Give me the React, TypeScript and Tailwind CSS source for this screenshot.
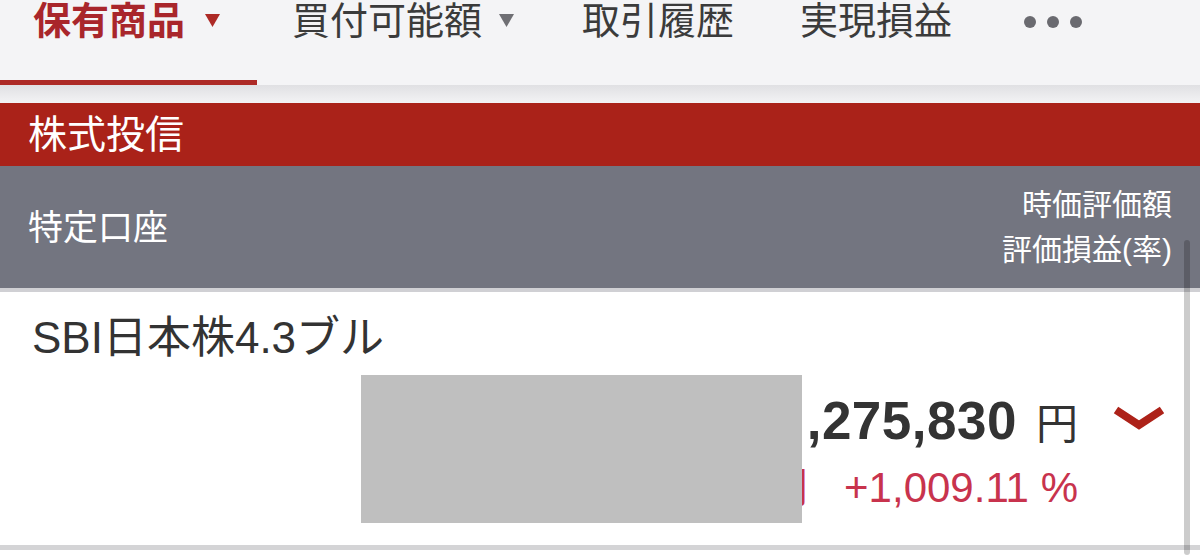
import React from "react";

function Caret({ color }: { color: string }) {
  return (
    <svg width="15" height="13" viewBox="0 0 15 13" className="shrink-0">
      <polygon points="0,0 15,0 7.5,13" fill={color} />
    </svg>
  );
}

function Chevron() {
  return (
    <svg width="52" height="26" viewBox="0 0 52 26" className="shrink-0">
      <polyline
        points="3,4 26,19 49,4"
        fill="none"
        stroke="#ad2219"
        strokeWidth="8"
        strokeLinejoin="miter"
      />
    </svg>
  );
}

function TabBar() {
  return (
    <div className="flex h-[85px] items-start bg-[#f4f4f6] text-[38px] leading-none text-[#3b3b3b]">
      <div className="flex h-full w-[257px] items-start border-b-[5px] border-[#ad2a26] pl-[33px] pt-[2px]">
        <span className="font-bold text-[#a9262b]">保有商品</span>
        <span className="ml-[20px] mt-[12px]">
          <Caret color="#ad2a26" />
        </span>
      </div>
      <div className="ml-[35px] flex items-start pt-[2px]">
        <span>買付可能額</span>
        <span className="ml-[17px] mt-[12px]">
          <Caret color="#6f6f74" />
        </span>
      </div>
      <span className="ml-[68px] pt-[2px]">取引履歴</span>
      <span className="ml-[66px] pt-[2px]">実現損益</span>
      <div className="ml-[72px] flex gap-[11px] pt-[16px]">
        <span className="size-[12px] rounded-full bg-[#6a6a70]" />
        <span className="size-[12px] rounded-full bg-[#6a6a70]" />
        <span className="size-[12px] rounded-full bg-[#6a6a70]" />
      </div>
    </div>
  );
}

export default function App() {
  return (
    <div className="relative h-[555px] w-[1200px] overflow-hidden bg-white font-['Liberation_Sans','Noto_Sans_CJK_JP',sans-serif]">
      <TabBar />
      <div className="h-[18px] bg-gradient-to-b from-[#e0e0e3] to-[#f3f3f5]" />

      <div className="flex h-[63px] items-center bg-[#aa2219] pl-[28px] text-[39px] leading-none text-white">
        株式投信
      </div>

      <div className="flex h-[126px] items-center justify-between border-b-[4px] border-[#d0d0d4] bg-[#737580] pl-[28px] pr-[28px] text-white">
        <span className="text-[35px] leading-none">特定口座</span>
        <div className="flex flex-col items-end text-[30px] leading-[45px]">
          <span>時価評価額</span>
          <span>評価損益(率)</span>
        </div>
      </div>

      <div className="relative flex h-[258px] flex-col border-b-[5px] border-[#d4d4d6] bg-white pl-[32px] pr-[35px]">
        <div className="pt-[24px] text-[44px] leading-none text-[#333]">SBI日本株4.3ブル</div>
        <div className="mt-[34px] flex items-start justify-end">
          <div className="flex flex-col items-end">
            <div className="flex items-baseline leading-none text-[#333]">
              <span className="text-[53px] font-bold tracking-[0.5px]">
                <span className="mr-[6px]">1</span>,275,830
              </span>
              <span className="ml-[19px] text-[42px]">円</span>
            </div>
            <div className="mt-[20px] flex items-baseline text-[42px] leading-none text-[#c8334d]">
              <span>+1,160,798 円</span>
              <span className="ml-[36px]">+1,009.11 %</span>
            </div>
          </div>
          <div className="ml-[35px] mt-[12px]">
            <Chevron />
          </div>
        </div>
        <div className="absolute left-[361px] top-[83px] h-[148px] w-[441px] bg-[#bfbfbf]" />
      </div>

      <div className="absolute bottom-0 right-[10px] top-[240px] w-[6px] rounded-full bg-black/20" />
    </div>
  );
}
